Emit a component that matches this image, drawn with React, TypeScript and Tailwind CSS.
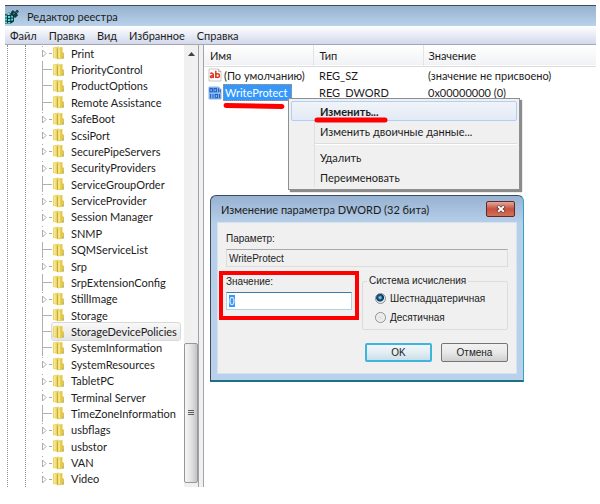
import { useState } from "react";

const menus = ["Файл", "Правка", "Вид", "Избранное", "Справка"];

const keys = [
  { name: "Print", expandable: true },
  { name: "PriorityControl" },
  { name: "ProductOptions" },
  { name: "Remote Assistance" },
  { name: "SafeBoot", expandable: true },
  { name: "ScsiPort", expandable: true },
  { name: "SecurePipeServers", expandable: true },
  { name: "SecurityProviders", expandable: true },
  { name: "ServiceGroupOrder" },
  { name: "ServiceProvider", expandable: true },
  { name: "Session Manager", expandable: true },
  { name: "SNMP", expandable: true },
  { name: "SQMServiceList" },
  { name: "Srp", expandable: true },
  { name: "SrpExtensionConfig" },
  { name: "StillImage", expandable: true },
  { name: "Storage" },
  { name: "StorageDevicePolicies", selected: true },
  { name: "SystemInformation" },
  { name: "SystemResources", expandable: true },
  { name: "TabletPC", expandable: true },
  { name: "Terminal Server", expandable: true },
  { name: "TimeZoneInformation" },
  { name: "usbflags", expandable: true },
  { name: "usbstor", expandable: true },
  { name: "VAN", expandable: true },
  { name: "Video", expandable: true },
];

function RegeditIcon() {
  return (
    <svg width="14" height="15" viewBox="0 0 14 15" className="shrink-0">
      <path d="M0 5.500l4-2 5 2v7l-3 2H0z" fill="#0b3d46" />
      <path d="M0 6.500h2v2H0zM3 7h2.200v2H3zM0 9.500h2v2H0zM3 10h2.200v2H3zM6.200 6.500H8v2H6.200zM6.200 9.500H8v2H6.200zM0 12.500h2V14H0zM3 13h2.200v1.200H3z" fill="#5fd6d6" />
      <path d="M1 5l2.500-1L6 5l-2.500 1z" fill="#a9efef" />
      <path d="M6 3l2-2 2 2 2-2.500L14 2.500l-2 2 1 2-3 2.500-2-2-2-1z" fill="#123a40" />
      <path d="M8.500 3.500l1.500 1-1.500 1zM11 3l1.500-.5-.5 1.500z" fill="#4fbcc0" />
    </svg>
  );
}

function FolderIcon() {
  return (
    <svg width="13" height="14" viewBox="0 0 13 14" className="shrink-0">
      <defs>
        <linearGradient id="folder" x1="0" x2="1">
          <stop offset="0" stopColor="#f3e47c" />
          <stop offset=".45" stopColor="#e8cc4c" />
          <stop offset="1" stopColor="#dfc04e" />
        </linearGradient>
      </defs>
      <path d="M1 1.500L7 .5v12.500L1 12z" fill="#ead468" />
      <path d="M6 1.500L10.500 1v5l1.500 1v5.500l-6 1z" fill="url(#folder)" />
      <path d="M2.800 2v9.500" stroke="#f9efa6" strokeWidth="1.200" />
      <path d="M5.500 2.500v10.500" stroke="#c4a436" strokeWidth=".9" />
      <path d="M7.300 3.500v8.500" stroke="#f8ea94" strokeWidth="1.200" />
      <path d="M11 10.500v2" stroke="#8fb0a8" strokeWidth="1" />
    </svg>
  );
}

function StringIcon() {
  return (
    <svg width="14" height="14" viewBox="0 0 14 14" className="shrink-0">
      <path d="M1 1h9.500L13 3.500V13H1z" fill="#fff" stroke="#b9b9b9" strokeWidth=".8" />
      <path d="M10.500 1v2.500H13" fill="none" stroke="#a9a9a9" strokeWidth=".8" />
      <g fill="none" stroke="#dc3a22" strokeWidth="1.500">
        <path d="M2.300 5.600c1.200-.8 3-.6 3 .8V10M5.300 7.300c-3.500 0-3.300 2.200-1.800 2.200 1 0 1.800-.6 1.800-1.200" />
        <path d="M7.800 2.800V10M7.800 7.800c0-2.800 3.600-2.800 3.600-.2s-3.600 2.600-3.600 0" />
      </g>
    </svg>
  );
}

function BinaryIcon() {
  return (
    <svg width="14" height="14" viewBox="0 0 14 14" className="shrink-0">
      <path d="M1 1h9.500L13 3.500V13H1z" fill="#8fbcf2" stroke="#6ea3e2" strokeWidth=".8" />
      <g fill="none" stroke="#1f5fc4" strokeWidth="1.100">
        <rect x="2" y="2.600" width="2.400" height="3.200" />
        <rect x="6" y="2.600" width="2.400" height="3.200" />
        <path d="M10.400 2.200v4M12.200 3.500v2.700M2.600 8v4.200M5 8v4.200" />
        <rect x="7.200" y="8.500" width="2.400" height="3.200" />
        <path d="M11.600 8v4.200" />
      </g>
    </svg>
  );
}

function TreeRow({ name, expandable, selected }: { name: string; expandable?: boolean; selected?: boolean }) {
  return (
    <li className="flex min-h-0 flex-1 items-center">
      {expandable ? (
        <svg width="10" height="16" viewBox="0 0 10 16" className="shrink-0">
          <path d="M.5 5l3.500 3.500L.5 12z" fill="#fff" stroke="#a3a3a3" strokeWidth=".9" />
          <path d="M7 8.500h3M0 1.500h1" stroke="#a8a8a8" />
        </svg>
      ) : (
        <span className="flex w-[10px] shrink-0 items-center self-stretch border-l border-[#b0b0b0]">
          <span className="w-full border-t border-[#b0b0b0]" />
        </span>
      )}
      <span
        className={
          selected
            ? "flex items-center gap-[6px] self-stretch rounded-xs bg-linear-to-b from-[#f8f8f8] to-[#e6e6e6] pr-[3px] outline outline-[#d9d9d9]"
            : "flex items-center gap-[6px] self-stretch"
        }
      >
        <FolderIcon />
        {name}
      </span>
    </li>
  );
}

function KeyTree() {
  return (
    <div className="flex w-[193px] shrink-0 bg-white">
      <div className="ml-[2px] w-[18px] border-l border-dotted border-[#8e8e8e]" />
      <div className="w-[17px] border-l border-dotted border-[#8e8e8e]" />
      <ul className="flex min-w-0 flex-1 flex-col">
        {keys.map((k) => (
          <TreeRow key={k.name} {...k} />
        ))}
      </ul>
      <div className="flex w-[14px] shrink-0 flex-col items-center bg-[#f0f0f0]">
        <svg width="7" height="4" viewBox="0 0 7 4" className="mt-[7px]">
          <path d="M3.500 0L7 4H0z" fill="#404040" />
        </svg>
        <div className="flex-[288]" />
        <div className="flex w-full flex-[139] flex-col items-center justify-center gap-px rounded-xs border border-[#979797] bg-linear-to-r from-[#f6f6f6] via-[#e3e3e3] to-[#c4c4c4]">
          <span className="h-px w-[6px] bg-[#5c5c5c]" />
          <span className="h-px w-[6px] bg-[#5c5c5c]" />
          <span className="h-px w-[6px] bg-[#5c5c5c]" />
        </div>
        <div className="flex-[4]" />
      </div>
    </div>
  );
}

function ValueTable() {
  return (
    <div className="min-w-0 flex-1 bg-white">
      <table className="w-full table-fixed border-collapse text-left">
        <thead>
          <tr className="h-[21px] border-b border-[#dcdcdc] bg-linear-to-b from-white to-[#f1f2f4]">
            <th className="w-[109px] border-r border-[#e2e4e8] pl-[6px] font-normal">Имя</th>
            <th className="w-[110px] border-r border-[#e2e4e8] pl-[6px] font-normal">Тип</th>
            <th className="pl-[5px] font-normal">Значение</th>
          </tr>
        </thead>
        <tbody className="whitespace-nowrap">
          <tr className="h-[18px]">
            <td className="pl-[4px]">
              <span className="flex items-center gap-[2px]">
                <StringIcon />
                (По умолчанию)
              </span>
            </td>
            <td className="pl-[6px]">REG_SZ</td>
            <td className="pl-[5px]">(значение не присвоено)</td>
          </tr>
          <tr className="h-[17px]">
            <td className="pl-[4px]">
              <span className="flex items-center gap-px">
                <BinaryIcon />
                <span className="border border-dotted border-[#d09058] bg-[#3397fb] pr-[4px] pl-px leading-[15px] text-white">
                  WriteProtect
                </span>
              </span>
            </td>
            <td className="pl-[6px]">REG_DWORD</td>
            <td className="pl-[5px]">0x00000000 (0)</td>
          </tr>
        </tbody>
      </table>
    </div>
  );
}

function ContextMenu() {
  return (
    <div
      role="menu"
      className="absolute top-[98px] left-[288px] flex w-[232px] flex-col border border-[#8f8f8f] bg-[#f0f0f0] p-[2px] shadow-[2px_2px_1px_#8b8b8b]"
    >
      <div className="absolute inset-y-[2px] left-[25px] border-l border-[#e0e0e0]" />
      <button role="menuitem" className="relative h-[20px] rounded-xs border border-[#aecff7] bg-linear-to-b from-[#f1f4f9] to-[#e2eaf4] pl-[28px] text-left font-bold">
        Изменить...
      </button>
      <button role="menuitem" className="relative h-[20px] pl-[29px] text-left">Изменить двоичные данные...</button>
      <div className="my-[2px] ml-[24px] border-t border-[#dcdcdc] border-b border-b-white" />
      <button role="menuitem" className="relative h-[20px] pl-[29px] text-left">Удалить</button>
      <button role="menuitem" className="relative h-[20px] pl-[29px] text-left">Переименовать</button>
    </div>
  );
}

const radioClass =
  "size-[11px] appearance-none rounded-full border border-[#8a8f94] bg-[radial-gradient(circle,#e4e4e4_20%,#fafafa_90%)] checked:bg-[radial-gradient(circle_at_45%_40%,#6fd0ee_8%,#12507c_32%,#0e3558_48%,#e8eef2_60%)]";

function EditDialog() {
  const [value, setValue] = useState("0");
  const [base, setBase] = useState("hex");

  return (
    <div
      role="dialog"
      aria-labelledby="dialog-title"
      className="absolute top-[195px] left-[210px] w-[314px] rounded-t-md border border-[#3c4b5a] border-r-[#2ba6c4] border-b-2 border-b-[#1e6f88] bg-linear-to-b from-[#97b2d2] via-[#b7cfe9] via-15% to-[#b9d1ea] px-[6px] pb-[6px] font-['Liberation_Sans',sans-serif] text-[10px]"
    >
      <div className="flex h-[26px] items-center justify-between pr-[2px] pl-[4px]">
        <h2 id="dialog-title" className="font-[Lato,'Noto_Sans',sans-serif] text-[11px]">Изменение параметра DWORD (32 бита)</h2>
        <button
          aria-label="Закрыть"
          className="flex h-[16px] w-[29px] items-center justify-center rounded-xs border border-[#5b2a2a] bg-linear-to-b from-[#e2a79c] via-[#c8503c] via-50% to-[#d0705a]"
        >
          <svg width="10" height="8" viewBox="0 0 10 8">
            <path d="M1.500 1l7 6M8.500 1l-7 6" stroke="#5a3030" strokeWidth="3.200" />
            <path d="M2 1.200l6 5.600M8 1.200L2 6.800" stroke="#fff" strokeWidth="1.900" />
          </svg>
        </button>
      </div>
      <div className="border border-[#d5e2ef] bg-[#f0f0f0] px-[8px] pt-[9px] pb-[11px]">
        <label htmlFor="param" className="block h-[17px]">Параметр:</label>
        <input
          id="param"
          readOnly
          value="WriteProtect"
          className="block h-[18px] w-full border border-[#dcdcdc] border-t-[#a9a9a9] bg-[#f0f0f0] px-[2px] outline-none"
        />
        <div className="mt-[8px] flex gap-[10px]">
          <div className="relative w-[126px]">
            <label htmlFor="value" className="block h-[17px]">Значение:</label>
            <input
              id="value"
              value={value}
              onChange={(e) => setValue(e.target.value)}
              className="block h-[18px] w-full border border-[#b5cfe7] border-t-[#3d7bad] bg-white bg-linear-to-r from-[#3397fb] to-[#3397fb] bg-size-[6px_12px] bg-position-[2px_2px] bg-no-repeat px-[2px] text-white outline-none"
            />
            <div className="pointer-events-none absolute -inset-x-[7px] -top-[4px] h-[49px] border-4 border-[#fe0000]" />
          </div>
          <fieldset className="flex h-[55px] min-w-0 flex-1 flex-col gap-[6px] rounded-xs border border-[#dcdcdc] pt-[5px] pl-[12px]">
            <legend className="-ml-[8px] px-[2px] leading-[12px]">Система исчисления</legend>
            <label className="flex items-center gap-[4px]">
              <input type="radio" name="base" checked={base === "hex"} onChange={() => setBase("hex")} className={radioClass} />
              Шестнадцатеричная
            </label>
            <label className="flex items-center gap-[4px]">
              <input type="radio" name="base" checked={base === "dec"} onChange={() => setBase("dec")} className={radioClass} />
              Десятичная
            </label>
          </fieldset>
        </div>
        <div className="mt-[13px] flex justify-end gap-[9px]">
          <button className="h-[19px] w-[67px] rounded-xs border-2 border-[#3fb4dc] bg-linear-to-b from-[#f1f7fa] via-[#e3eef3] via-50% to-[#c9dfe9] leading-[13px]">OK</button>
          <button className="h-[19px] w-[67px] rounded-xs border border-[#757575] bg-linear-to-b from-[#f2f2f2] via-[#e8e8e8] via-50% to-[#cfcfcf] leading-[13px]">Отмена</button>
        </div>
      </div>
    </div>
  );
}

export default function App() {
  return (
    <main className="relative flex h-screen flex-col bg-white pt-[5px] pr-[4px] pb-[17px] pl-[5px] font-[Lato,'Noto_Sans',sans-serif] text-[11px] leading-[13px] text-[#1c1c1c]">
      <header className="flex h-[21px] shrink-0 items-center gap-[8px] border-t border-[#3f4c59] bg-linear-to-b from-[#97b3d0] to-[#b9d1ea]">
        <RegeditIcon />
        <h1>Редактор реестра</h1>
      </header>
      <nav className="flex h-[19px] shrink-0 items-center gap-[12px] border-b border-[#a5a8ae] bg-linear-to-b from-white via-[#e9ecf6] to-[#d3d9ec] pl-[5px]">
        {menus.map((m) => (
          <button key={m}>{m}</button>
        ))}
      </nav>
      <div className="flex min-h-0 flex-1">
        <KeyTree />
        <div className="w-[6px] shrink-0 border-x border-[#a0a4aa] bg-[#f0f0f0]" />
        <ValueTable />
      </div>
      <ContextMenu />
      <EditDialog />
      <svg width="170" height="24" viewBox="0 0 170 24" className="pointer-events-none absolute top-[102px] left-[220px]">
        <path d="M6 3.500l56 1M97 18h68" stroke="#fe0000" strokeWidth="5" strokeLinecap="round" />
      </svg>
    </main>
  );
}
